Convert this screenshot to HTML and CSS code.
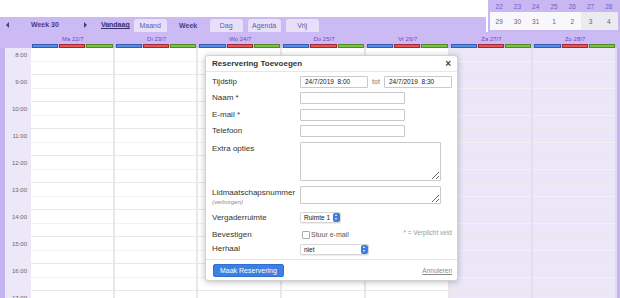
FILE: index.html
```html
<!DOCTYPE html>
<html lang="nl">
  <head>
    <meta charset="UTF-8" />
    <title>Reserveringen</title>
    <link rel="stylesheet" href="styles.css">
  </head>
  <body>
    <div class="top">
      <div class="toolbar">
        <span class="nav prev"></span>
        <b class="week-no">Week 30</b>
        <span class="nav next"></span>
        <a class="today" href="#">Vandaag</a>
        <div class="tabs">
          <span class="tab">Maand</span>
          <span class="tab active">Week</span>
          <span class="tab">Dag</span>
          <span class="tab">Agenda</span>
          <span class="tab">Vrij</span>
        </div>
      </div>
      <table class="minical">
        <tr class="prev-week">
          <td>22</td><td>23</td><td>24</td><td>25</td><td>26</td><td>27</td><td>28</td>
        </tr>
        <tr class="this-week">
          <td>29</td><td>30</td><td>31</td><td>1</td><td>2</td><td class="wknd">3</td><td class="wknd">4</td>
        </tr>
      </table>
    </div>

    <div class="days">
      <div class="corner"></div>
      <div class="day-head"><span>Ma 22/7</span><div class="bars"><i class="blue"></i><i class="red"></i><i class="green"></i></div></div>
      <div class="day-head"><span>Di 23/7</span><div class="bars"><i class="blue"></i><i class="red"></i><i class="green"></i></div></div>
      <div class="day-head"><span>Wo 24/7</span><div class="bars"><i class="blue"></i><i class="red"></i><i class="green"></i></div></div>
      <div class="day-head"><span>Do 25/7</span><div class="bars"><i class="blue"></i><i class="red"></i><i class="green"></i></div></div>
      <div class="day-head"><span>Vr 26/7</span><div class="bars"><i class="blue"></i><i class="red"></i><i class="green"></i></div></div>
      <div class="day-head"><span>Za 27/7</span><div class="bars"><i class="blue"></i><i class="red"></i><i class="green"></i></div></div>
      <div class="day-head"><span>Zo 28/7</span><div class="bars"><i class="blue"></i><i class="red"></i><i class="green"></i></div></div>
      <div class="corner"></div>
    </div>

    <div class="grid">
      <div class="edge"></div>
      <div class="times">
        <div>8:00</div><div>9:00</div><div>10:00</div><div>11:00</div><div>12:00</div>
        <div>13:00</div><div>14:00</div><div>15:00</div><div>16:00</div><div>17:00</div>
      </div>
      <div class="col"></div>
      <div class="col"></div>
      <div class="col"></div>
      <div class="col"></div>
      <div class="col"></div>
      <div class="col weekend"></div>
      <div class="col weekend"></div>
      <div class="edge"></div>
    </div>

    <!-- popup voor nieuwe reservering -->
    <div class="modal">
      <div class="modal-head">
        <b>Reservering Toevoegen</b>
        <span class="close">&times;</span>
      </div>
      <div class="modal-body">
        <div class="row">
          <label>Tijdstip</label>
          <input class="time" type="text" value="24/7/2019  8:00" />
          <span class="tot">tot</span>
          <input class="time" type="text" value="24/7/2019  8:30" />
        </div>
        <div class="row">
          <label>Naam *</label>
          <input class="text" type="text" />
        </div>
        <div class="row">
          <label>E-mail *</label>
          <input class="text" type="text" />
        </div>
        <div class="row">
          <label>Telefoon</label>
          <input class="text" type="text" />
        </div>
        <div class="row big">
          <label>Extra opties</label>
          <textarea class="extra"></textarea>
        </div>
        <div class="row big">
          <label>Lidmaatschapsnummer<small>(verborgen)</small></label>
          <textarea class="member"></textarea>
        </div>
        <div class="row big">
          <label>Vergaderruimte</label>
          <div class="select room">Ruimte 1<span class="stepper"></span></div>
        </div>
        <div class="row confirm">
          <label>Bevestigen</label>
          <span class="checkbox"></span><span class="check-text">Stuur e-mail</span>
          <span class="required">* = Verplicht veld</span>
        </div>
        <div class="row">
          <label>Herhaal</label>
          <div class="select repeat">niet<span class="stepper"></span></div>
        </div>
      </div>
      <div class="modal-foot">
        <button class="submit">Maak Reservering</button>
        <a class="cancel" href="#">Annuleren</a>
      </div>
    </div>
  </body>
</html>
```

FILE: styles.css
```css
body {
  margin: 0;
  width: 620px;
  height: 298px;
  overflow: hidden;
  font-family: "Liberation Sans", Arial, sans-serif;
  color: #333;
  background-color: #fff;
}

/* bovenbalk */
.top {
  display: flex;
  align-items: flex-end;
  height: 32px;
}

.toolbar {
  flex: 1;
  height: 15px;
  background-color: #cbbaf3;
  display: flex;
  align-items: center;
  padding-left: 6px;
  margin-right: 2px;
  color: #4b3b86;
}

.nav {
  width: 0;
  height: 0;
  border-top: 3px solid transparent;
  border-bottom: 3px solid transparent;
}

.nav.prev {
  border-right: 3px solid #4b3b86;
}

.nav.next {
  border-left: 3px solid #4b3b86;
  margin-left: 25px;
}

.week-no {
  font-size: 7px;
  margin-left: 22px;
}

.today {
  font-size: 7px;
  font-weight: bold;
  color: #3b2f6e;
  margin-left: 14px;
}

.tabs {
  display: flex;
  gap: 5px;
  align-self: flex-end;
  margin-left: 4px;
}

.tab {
  width: 33px;
  height: 13px;
  line-height: 13px;
  text-align: center;
  font-size: 7px;
  color: #6a57ae;
  background-color: #e7e0f8;
  border-radius: 3px 3px 0 0;
}

.tab.active {
  background-color: #cbbaf3;
  color: #4b3b86;
  font-weight: bold;
}

/* kleine kalender rechtsboven */
.minical {
  width: 132px;
  height: 32px;
  border-collapse: collapse;
  background-color: #c8b7f1;
  border: 2px solid #c8b7f1;
  border-top: 0;
  font-size: 6.5px;
  text-align: center;
}

.minical td {
  padding: 0;
  width: 18px;
}

.minical .prev-week td {
  height: 12px;
  color: #7a5cc4;
}

.minical .this-week td {
  height: 18px;
  background-color: #f8f7fc;
  color: #666;
}

.minical .this-week td.wknd {
  background-color: #ebeaf1;
}

/* dagkoppen */
.days {
  display: grid;
  grid-template-columns: 31px repeat(7, 1fr) 3px;
  height: 16px;
  background-color: #cbbaf3;
}

.day-head {
  display: flex;
  flex-direction: column;
  align-items: center;
}

.day-head span {
  font-size: 6px;
  line-height: 8px;
  margin-top: 3px;
  color: #7446c2;
}

.bars {
  display: flex;
  gap: 1px;
  width: 100%;
  box-sizing: border-box;
  padding: 0 2px 0 1px;
  margin-top: 1px;
}

.bars i {
  flex: 1;
  height: 2px;
  border: 1px solid;
}

.bars .blue { background-color: #5b8be0; border-color: #2f5fb8; }
.bars .red { background-color: #e0575a; border-color: #a8262c; }
.bars .green { background-color: #7dc048; border-color: #4e8d22; }

/* rooster */
.grid {
  display: grid;
  grid-template-columns: 5px 26px repeat(7, 1fr) 3px;
  height: 250px;
}

.edge {
  background-color: #c6b4f0;
}

.times {
  background-color: #ece8f8;
  padding-top: 1px;
}

.times div {
  height: 27px;
  line-height: 13px;
  font-size: 6px;
  text-align: right;
  padding-right: 4px;
  color: #666;
}

.col {
  border-right: 2px solid #e8e7ec;
  padding-top: 1px;
  background-image: repeating-linear-gradient(
    to bottom,
    transparent 0 13px,
    #f2f2f4 13px 14px,
    transparent 14px 26px,
    #e8e8eb 26px 27px
  );
}

.col.weekend {
  background-color: #ebe7f8;
  border-right-color: #e2ddf0;
}

/* popup */
.modal {
  position: absolute;
  left: 205px;
  top: 55px;
  width: 253px;
  height: 226px;
  box-sizing: border-box;
  background-color: #fff;
  border: 1px solid #d2d2d2;
  border-radius: 3px;
  box-shadow: 0 1px 6px rgba(0, 0, 0, 0.25);
  display: flex;
  flex-direction: column;
}

.modal-head {
  height: 16px;
  display: flex;
  align-items: center;
  justify-content: space-between;
  padding: 0 6px;
  border-bottom: 1px solid #e6e6e6;
  font-size: 8px;
}

.close {
  font-size: 10px;
  font-weight: bold;
  color: #444;
}

.modal-body {
  flex: 1;
  padding: 4px 5px 0 6px;
}

.row {
  display: flex;
  align-items: center;
  margin-bottom: 4.5px;
}

.row.big {
  align-items: flex-start;
  margin-bottom: 5px;
}

.row.confirm {
  margin-bottom: 2px;
}

.row label {
  width: 88px;
  flex: none;
  font-size: 8px;
  line-height: 12px;
  color: #333;
}

.row.big label {
  margin-top: 1px;
}

.row label small {
  display: block;
  font-size: 6px;
  line-height: 7px;
  font-style: italic;
  color: #888;
}

.row input,
.row textarea {
  box-sizing: border-box;
  border: 1px solid #c9c9c9;
  border-radius: 1px;
  margin: 0;
  padding: 0 0 0 3px;
  font-family: inherit;
  font-size: 6.5px;
  color: #222;
  background-color: #fff;
}

.row input.time {
  width: 68px;
  height: 12px;
  padding-left: 4px;
}

.tot {
  width: 16px;
  text-align: center;
  font-size: 7px;
  color: #777;
}

.row input.text {
  width: 105px;
  height: 12px;
}

.row textarea {
  width: 141px;
  resize: both;
}

.row textarea.extra {
  height: 39px;
}

.row textarea.member {
  height: 18px;
}

.select {
  box-sizing: border-box;
  height: 11px;
  display: flex;
  align-items: center;
  justify-content: space-between;
  padding-left: 3px;
  font-size: 6.5px;
  color: #111;
  border: 1px solid #d6d6d6;
  border-radius: 2px;
  box-shadow: 0 1px 1px rgba(0, 0, 0, 0.08);
  margin-top: 1px;
}

.select.room {
  width: 41px;
}

.select.repeat {
  width: 69px;
}

.stepper {
  width: 7px;
  height: 9px;
  background-color: #3b7de0;
  border-radius: 2px;
  position: relative;
}

.stepper::before,
.stepper::after {
  content: "";
  position: absolute;
  left: 2px;
  border-left: 1.5px solid transparent;
  border-right: 1.5px solid transparent;
}

.stepper::before {
  top: 1.5px;
  border-bottom: 2px solid #fff;
}

.stepper::after {
  bottom: 1.5px;
  border-top: 2px solid #fff;
}

.checkbox {
  width: 6px;
  height: 6px;
  border: 1px solid #aaa;
  border-radius: 1px;
  margin-left: 2px;
}

.check-text {
  font-size: 7px;
  color: #555;
  margin-left: 1px;
}

.required {
  margin-left: auto;
  font-size: 6.5px;
  color: #999;
  margin-top: -4px;
}

.modal-foot {
  height: 22px;
  border-top: 1px solid #e6e6e6;
  display: flex;
  align-items: center;
  justify-content: space-between;
  padding: 0 5px 0 7px;
}

.submit {
  height: 13px;
  padding: 0 6px;
  border: 1px solid #2f6fd2;
  border-radius: 2px;
  background-color: #3d80e3;
  color: #fff;
  font-family: inherit;
  font-size: 7px;
}

.cancel {
  font-size: 6.5px;
  color: #888;
}
```
